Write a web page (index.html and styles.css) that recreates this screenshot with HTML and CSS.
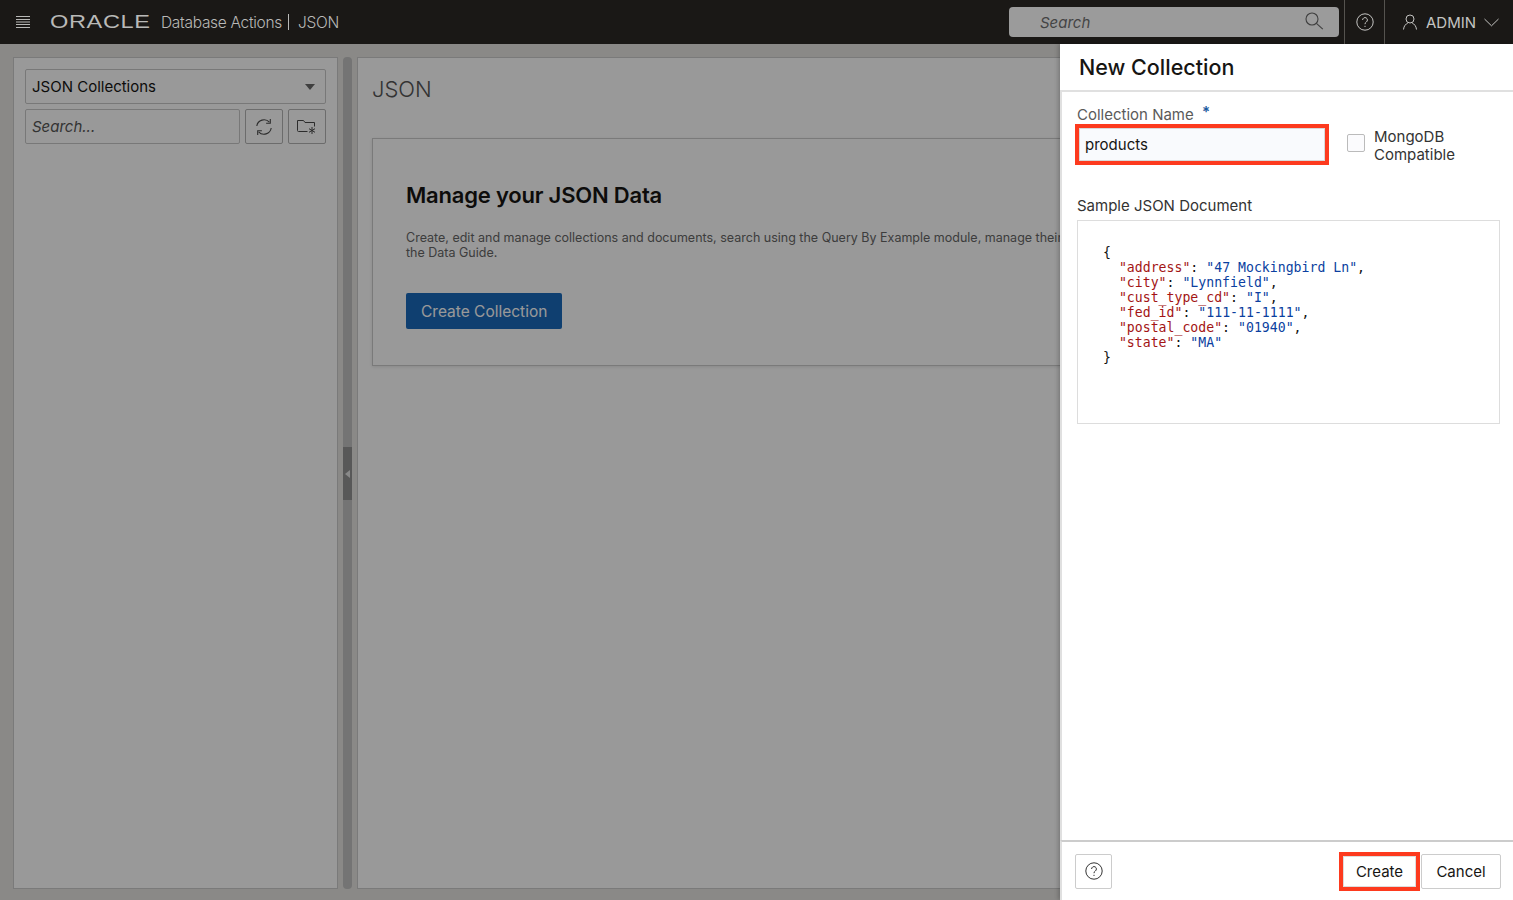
FILE: index.html
```html
<!DOCTYPE html>
<html lang="en">

<head>
    <meta charset="UTF-8">
    <meta name="viewport" content="width=device-width, initial-scale=1.0">
    <title>JSON - Database Actions</title>
    <link rel="stylesheet" href="styles.css">
</head>

<body>
    <header class="topbar">
        <button class="menu-btn" aria-label="Menu">
            <svg width="14" height="12" viewBox="0 0 14 12" fill="none" stroke="#b8b8b6" stroke-width="1">
                <path d="M0 .5h14M0 3.5h14M0 6h14M0 8.5h14M0 11.5h14" />
            </svg>
        </button>
        <div class="brand"><span class="brand-logo">ORACLE</span></div>
        <span class="brand-app">Database Actions</span>
        <span class="brand-sep"></span>
        <span class="brand-page">JSON</span>

        <div class="top-search">
            <span>Search</span>
            <svg width="20" height="20" viewBox="0 0 20 20" fill="none" stroke="#3f3f3f" stroke-width="1.1">
                <circle cx="8" cy="8" r="6" />
                <path d="M12.4 12.4l6.4 5.8" />
            </svg>
        </div>
        <div class="top-cell top-help">
            <svg width="18" height="18" viewBox="0 0 18 18" fill="none" stroke="#c4c4c2" stroke-width="1">
                <circle cx="9" cy="9" r="8.2" />
                <path d="M6.6 7a2.4 2.4 0 1 1 3.7 2c-.9.6-1.3 1-1.3 2.2" />
                <path d="M9 12.8v1.2" />
            </svg>
        </div>
        <div class="top-user">
            <svg width="16" height="16" viewBox="0 0 16 16" fill="none" stroke="#c4c4c2" stroke-width="1">
                <circle cx="8" cy="5" r="4" />
                <path d="M1.5 15.5c.3-3.6 2.4-5.6 4.3-6.4M14.500 15.500c-.3-3.600-2.400-5.600-4.300-6.400" />
            </svg>
            <span>ADMIN</span>
            <svg width="15" height="9" viewBox="0 0 15 9" fill="none" stroke="#c4c4c2" stroke-width="1">
                <path d="M.5 1l7 6.800 7-6.800" />
            </svg>
        </div>
    </header>

    <main class="workspace">
        <section class="side-panel">
            <div class="select-box">
                <span>JSON Collections</span>
                <i class="select-arrow"></i>
            </div>
            <div class="side-tools">
                <div class="side-search">Search...</div>
                <button class="tool-btn" aria-label="Refresh">
                    <svg width="18" height="18" viewBox="0 0 18 18" fill="none" stroke="#4a4a4a" stroke-width="1.1">
                        <path d="M1.800 8A7.300 7.300 0 0 1 14.400 4.200M16.200 10A7.300 7.300 0 0 1 3.600 13.800" />
                        <path d="M15.300 1v4.200h-4.200L15.300 5.200z" fill="#4a4a4a" />
                        <path d="M2.700 17v-4.200h4.200L2.700 12.800z" fill="#4a4a4a" />
                    </svg>
                </button>
                <button class="tool-btn" aria-label="New collection">
                    <svg width="20" height="16" viewBox="0 0 20 16" fill="none" stroke="#4a4a4a" stroke-width="1">
                        <path d="M10.500 12.500H1.500a1 1 0 0 1-1-1V1.500h6l1.500 2h9.500v4" />
                        <path d="M15 8v7M12 9.700l6 3.600M18 9.700l-6 3.600" />
                    </svg>
                </button>
            </div>
        </section>

        <div class="splitter">
            <div class="splitter-handle"><i></i></div>
        </div>

        <section class="content-panel">
            <h1 class="page-title">JSON</h1>
            <div class="intro-card">
                <h2>Manage your JSON Data</h2>
                <p>Create, edit and manage collections and documents, search using the Query By Example module, manage their indexes and view<br>the Data Guide.</p>
                <button class="primary-btn">Create Collection</button>
            </div>
        </section>
    </main>

    <div class="scrim"></div>

    <aside class="drawer">
        <div class="drawer-head">New Collection</div>

        <div class="drawer-body">
            <div class="name-row">
                <div class="name-field">
                    <label for="collectionName">Collection Name <span class="req">*</span></label>
                    <input id="collectionName" class="name-input" type="text" value="products">
                </div>
                <label class="check-field">
                    <span class="check-box"></span>
                    <span>MongoDB<br>Compatible</span>
                </label>
            </div>

            <div class="sample-label">Sample JSON Document</div>
            <pre class="sample-box">{
  <b>"address"</b>: <em>"47 Mockingbird Ln"</em>,
  <b>"city"</b>: <em>"Lynnfield"</em>,
  <b>"cust_type_cd"</b>: <em>"I"</em>,
  <b>"fed_id"</b>: <em>"111-11-1111"</em>,
  <b>"postal_code"</b>: <em>"01940"</em>,
  <b>"state"</b>: <em>"MA"</em>
}</pre>
        </div>

        <div class="drawer-foot">
            <button class="foot-btn help-btn" aria-label="Help">
                <svg width="18" height="18" viewBox="0 0 18 18" fill="none" stroke="#333" stroke-width="1">
                    <circle cx="9" cy="9" r="8.200" />
                    <path d="M6.600 7a2.400 2.400 0 1 1 3.700 2c-.9.600-1.300 1-1.300 2.200" />
                    <path d="M9 12.800v1.200" />
                </svg>
            </button>
            <button class="foot-btn create-btn">Create</button>
            <button class="foot-btn cancel-btn">Cancel</button>
        </div>
    </aside>
</body>

</html>
```

FILE: styles.css
```css
* {
    box-sizing: border-box;
}

html,
body {
    height: 100%;
}

body {
    margin: 0;
    overflow: hidden;
    font-family: Inter, "Noto Sans", sans-serif;
    color: #161513;
    background-color: #e6e5e1;
}

button {
    font-family: inherit;
    cursor: pointer;
}

/* top bar */
.topbar {
    height: 44px;
    display: flex;
    align-items: center;
    background-color: #1a1816;
    color: #b9b9b7;
}

.menu-btn {
    width: 14px;
    height: 12px;
    margin-left: 16px;
    padding: 0;
    display: flex;
    background: none;
    border: none;
}

.brand {
    width: 111px;
    margin-left: 20px;
}

.brand-logo {
    display: inline-block;
    font-family: "Liberation Sans", sans-serif;
    font-size: 19px;
    line-height: 20px;
    letter-spacing: 0.5px;
    color: #b9b9b7;
    transform: scaleX(1.24);
    transform-origin: left center;
}

.brand-app,
.brand-page {
    font-size: 15.500px;
    font-weight: 300;
    letter-spacing: -0.3px;
}

.brand-sep {
    width: 1px;
    height: 16px;
    margin: 0 9px 0 6px;
    background-color: #b9b9b7;
}

.top-search {
    width: 330px;
    height: 30px;
    margin-left: auto;
    margin-top: 0;
    padding: 0 15px 0 31px;
    display: flex;
    align-items: center;
    justify-content: space-between;
    background-color: #9b9b9b;
    border-radius: 4px;
    font-size: 15px;
    font-style: italic;
    color: #444;
}

.top-search svg {
    margin-top: -3px;
}

.top-cell {
    width: 41px;
    height: 44px;
    margin-left: 5px;
    display: flex;
    align-items: center;
    justify-content: center;
    border-left: 1px solid #55534f;
    border-right: 1px solid #55534f;
}

.top-help svg {
    margin-top: -1px;
}

.top-user {
    width: 128px;
    display: flex;
    align-items: center;
    padding-left: 17px;
    color: #c4c4c2;
    font-size: 15px;
}

.top-user span {
    margin: 0 8px 0 8px;
}

/* page behind the drawer */
.workspace {
    height: 856px;
    padding: 13px 0 11px 13px;
    display: flex;
}

.side-panel {
    width: 325px;
    padding: 11px;
    background-color: #fff;
    border: 1px solid #ccc;
}

.select-box {
    height: 35px;
    padding: 0 10px 0 6px;
    display: flex;
    align-items: center;
    justify-content: space-between;
    border: 1px solid #c9c9c9;
    border-radius: 2px;
    font-size: 15px;
}

.select-arrow {
    width: 0;
    height: 0;
    border-left: 5px solid transparent;
    border-right: 5px solid transparent;
    border-top: 6px solid #6a6a6a;
}

.side-tools {
    margin-top: 5px;
    display: flex;
    gap: 5px;
}

.side-search {
    flex: 1;
    height: 35px;
    padding-left: 6px;
    line-height: 33px;
    border: 1px solid #c9c9c9;
    border-radius: 2px;
    font-size: 15px;
    font-style: italic;
    color: #555;
}

.tool-btn {
    width: 38px;
    height: 35px;
    padding: 0;
    display: flex;
    align-items: center;
    justify-content: center;
    background: #fff;
    border: 1px solid #b5b5b5;
    border-radius: 2px;
}

.splitter {
    position: relative;
    width: 9px;
    margin: 0 5px;
    background-color: #c2c2c2;
    border-radius: 4px;
}

.splitter-handle {
    margin-top: 390px;
    height: 53px;
    display: flex;
    align-items: center;
    justify-content: center;
    background-color: #939393;
}

.splitter-handle i {
    width: 0;
    height: 0;
    border-top: 4px solid transparent;
    border-bottom: 4px solid transparent;
    border-right: 5px solid #e4e4e4;
}

.content-panel {
    flex: 1;
    padding: 0 14px;
    background-color: #fff;
    border: 1px solid #ccc;
    border-right: none;
}

.page-title {
    margin: 18px 0 0;
    font-size: 22px;
    line-height: 26px;
    font-weight: 300;
    color: #555;
}

.intro-card {
    height: 228px;
    margin-top: 36px;
    padding: 43px 33px 0;
    border: 1px solid #ccc;
    box-shadow: 0 1px 3px rgba(0, 0, 0, 0.1);
}

.intro-card h2 {
    margin: 0;
    font-size: 22px;
    line-height: 26px;
    font-weight: 600;
    letter-spacing: -0.2px;
}

.intro-card p {
    margin: 22px 0 0;
    font-size: 12.500px;
    line-height: 15px;
    color: #666;
    white-space: nowrap;
}

.primary-btn {
    height: 36px;
    margin-top: 33px;
    padding: 0 15px;
    background-color: #1969bb;
    color: #fff;
    border: none;
    border-radius: 2px;
    font-size: 15.500px;
}

.scrim {
    position: absolute;
    top: 44px;
    left: 0;
    right: 0;
    bottom: 0;
    background-color: rgba(0, 0, 0, 0.4);
}

/* drawer */
.drawer {
    position: absolute;
    top: 44px;
    right: 0;
    bottom: 0;
    width: 453px;
    display: flex;
    flex-direction: column;
    background-color: #fff;
    box-shadow: -2px 0 4px rgba(0, 0, 0, 0.2);
}

.drawer-head {
    height: 48px;
    padding: 9px 0 0 19px;
    border-bottom: 2px solid #e0e0e0;
    font-size: 21.500px;
    line-height: 28px;
    font-weight: 500;
}

.drawer-body {
    flex: 1;
    padding: 13px 13px 0 15px;
    border-left: 2px solid #e0e0e0;
    margin-top: 0;
}

.name-row {
    display: flex;
}

.name-field {
    width: 254px;
}

.name-field label {
    display: block;
    height: 19px;
    font-size: 15px;
    line-height: 19px;
    color: #5a5a5a;
}

.req {
    position: relative;
    top: -3px;
    margin-left: 4px;
    font-size: 15px;
    font-weight: 600;
    color: #1a5a9e;
}

.name-input {
    display: block;
    width: 254px;
    height: 41px;
    margin-left: -2px;
    padding: 0 6px;
    background-color: #f9fafd;
    border: 4px solid #fd3a1e;
    outline: none;
    box-shadow: inset 0 0 0 1px #d8d8d8;
    font-family: inherit;
    font-size: 15px;
    color: #161513;
}

.check-field {
    margin: 23px 0 0 16px;
    display: flex;
    align-items: flex-start;
    gap: 9px;
    font-size: 15px;
    line-height: 18px;
    color: #333;
}

.check-box {
    width: 18px;
    height: 18px;
    margin-top: 6px;
    background-color: #fbfbfd;
    border: 1px solid #bbb;
    border-radius: 2px;
}

.sample-label {
    margin-top: 31px;
    font-size: 15px;
    line-height: 19px;
    color: #333;
}

.sample-box {
    height: 204px;
    margin: 5px 0 0;
    padding: 24px 0 0 25px;
    border: 1px solid #ddd;
    font-family: "DejaVu Sans Mono", "Liberation Mono", monospace;
    font-size: 13.200px;
    line-height: 15px;
    color: #111;
}

.sample-box b {
    font-weight: 400;
    color: #a31515;
}

.sample-box em {
    font-style: normal;
    color: #0b3fa0;
}

.drawer-foot {
    height: 60px;
    padding: 0 12px 0 13px;
    display: flex;
    align-items: center;
    border-top: 2px solid #ccc;
    border-left: 2px solid #e0e0e0;
}

.foot-btn {
    height: 35px;
    background-color: #fff;
    border: 1px solid #ccc;
    border-radius: 2px;
    font-size: 15px;
    color: #161513;
}

.help-btn {
    width: 37px;
    padding: 0;
    display: flex;
    align-items: center;
    justify-content: center;
}

.create-btn {
    width: 81px;
    height: 39px;
    margin-left: auto;
    border: 4px solid #fd3a1e;
    border-radius: 0;
    box-shadow: inset 0 0 0 1px #ddd;
}

.cancel-btn {
    width: 80px;
    margin-left: 1px;
}
```
